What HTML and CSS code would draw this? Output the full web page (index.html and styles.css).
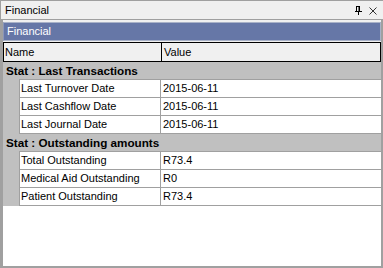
FILE: index.html
```html
<!DOCTYPE html>
<html lang="en">
<head>
    <meta charset="UTF-8">
    <meta name="viewport" content="width=device-width, initial-scale=1.0">
    <title>Financial</title>
    <link rel="stylesheet" href="styles.css">
</head>
<body>
    <div class="window">
        <div class="titlebar">
            <span class="title">Financial</span>
            <div class="tools">
                <svg class="pin" width="7" height="9" viewBox="0 0 7 9">
                    <path d="M1.5 0.5v5M4.5 0.5v5" stroke="#000" stroke-width="1" fill="none"/>
                    <path d="M1 0.5h4" stroke="#000" stroke-width="1"/>
                    <path d="M4 0.5v5" stroke="#000" stroke-width="1"/>
                    <path d="M0 5.5h7" stroke="#000" stroke-width="1"/>
                    <path d="M3.5 6v3" stroke="#000" stroke-width="1"/>
                </svg>
                <svg class="close" width="8" height="8" viewBox="0 0 8 8">
                    <path d="M0.5 0.5l7 7M7.5 0.5l-7 7" stroke="#333" stroke-width="1" fill="none"/>
                </svg>
            </div>
        </div>
        <div class="panel">
            <div class="caption">Financial</div>
            <div class="grid">
                <div class="head">
                    <div class="head-name">Name</div>
                    <div class="head-value">Value</div>
                </div>

                <div class="cat">Stat : Last Transactions</div>
                <div class="group">
                    <div class="row"><div class="name">Last Turnover Date</div><div class="value">2015-06-11</div></div>
                    <div class="row"><div class="name">Last Cashflow Date</div><div class="value">2015-06-11</div></div>
                    <div class="row"><div class="name">Last Journal Date</div><div class="value">2015-06-11</div></div>
                </div>

                <div class="cat">Stat : Outstanding amounts</div>
                <div class="group">
                    <div class="row"><div class="name">Total Outstanding</div><div class="value">R73.4</div></div>
                    <div class="row"><div class="name">Medical Aid Outstanding</div><div class="value">R0</div></div>
                    <div class="row"><div class="name">Patient Outstanding</div><div class="value">R73.4</div></div>
                </div>
            </div>
        </div>
    </div>
</body>
</html>
```

FILE: styles.css
```css
body {
    margin: 0;
    font-family: "Liberation Sans", Arial, sans-serif;
    font-size: 11px;
    color: #000;
    background-color: #f0f0f0;
}
.window {
    width: 383px;
    height: 268px;
    box-sizing: border-box;
    border: 1px solid #a0a0a0;
    border-bottom: none;
    border-right: none;
    display: flex;
    flex-direction: column;
    background-color: #f0f0f0;
}
.titlebar {
    height: 18px;
    border-bottom: 1px solid #a0a0a0;
    display: flex;
    align-items: center;
    justify-content: space-between;
    padding: 0 6px 0 4px;
}
.title {
    color: #000;
}
.tools {
    display: flex;
    align-items: center;
    gap: 7px;
    padding-top: 1px;
}
.pin {
    display: block;
}
.close {
    display: block;
}
.panel {
    flex: 1;
    display: flex;
    flex-direction: column;
    border-left: 2px solid #a0a0a0;
    border-right: 2px solid #a0a0a0;
    border-bottom: 2px solid #a0a0a0;
    padding-top: 2px;
}
.caption {
    height: 17px;
    line-height: 17px;
    background-color: #6677a7;
    border: 1px solid #a9b2c8;
    border-left-color: #8a96b8;
    color: #fff;
    padding-left: 3px;
    margin-bottom: 1px;
}
.grid {
    flex: 1;
    background-color: #fff;
}
.head {
    display: flex;
    height: 18px;
    line-height: 18px;
    border: 1px solid #000;
    background-color: #f0f0f0;
}
.head-name {
    width: 156px;
    padding-left: 1px;
    border-right: 1px solid #000;
}
.head-value {
    flex: 1;
    padding-left: 2px;
}
.cat {
    height: 17px;
    line-height: 17px;
    background-color: #c0c0c0;
    font-weight: bold;
    font-size: 11.7px;
    padding-left: 3px;
}
.group {
    background-color: #c0c0c0;
    padding-left: 16px;
}
.row {
    display: flex;
    height: 17px;
    line-height: 17px;
    border-top: 1px solid #a0a0a0;
    border-left: 1px solid #a0a0a0;
    background-color: #fff;
}
.row:last-child {
    border-bottom: 1px solid #a0a0a0;
}
.name {
    width: 139px;
    padding-left: 1px;
    border-right: 1px solid #a0a0a0;
}
.value {
    flex: 1;
    padding-left: 2px;
}
```
